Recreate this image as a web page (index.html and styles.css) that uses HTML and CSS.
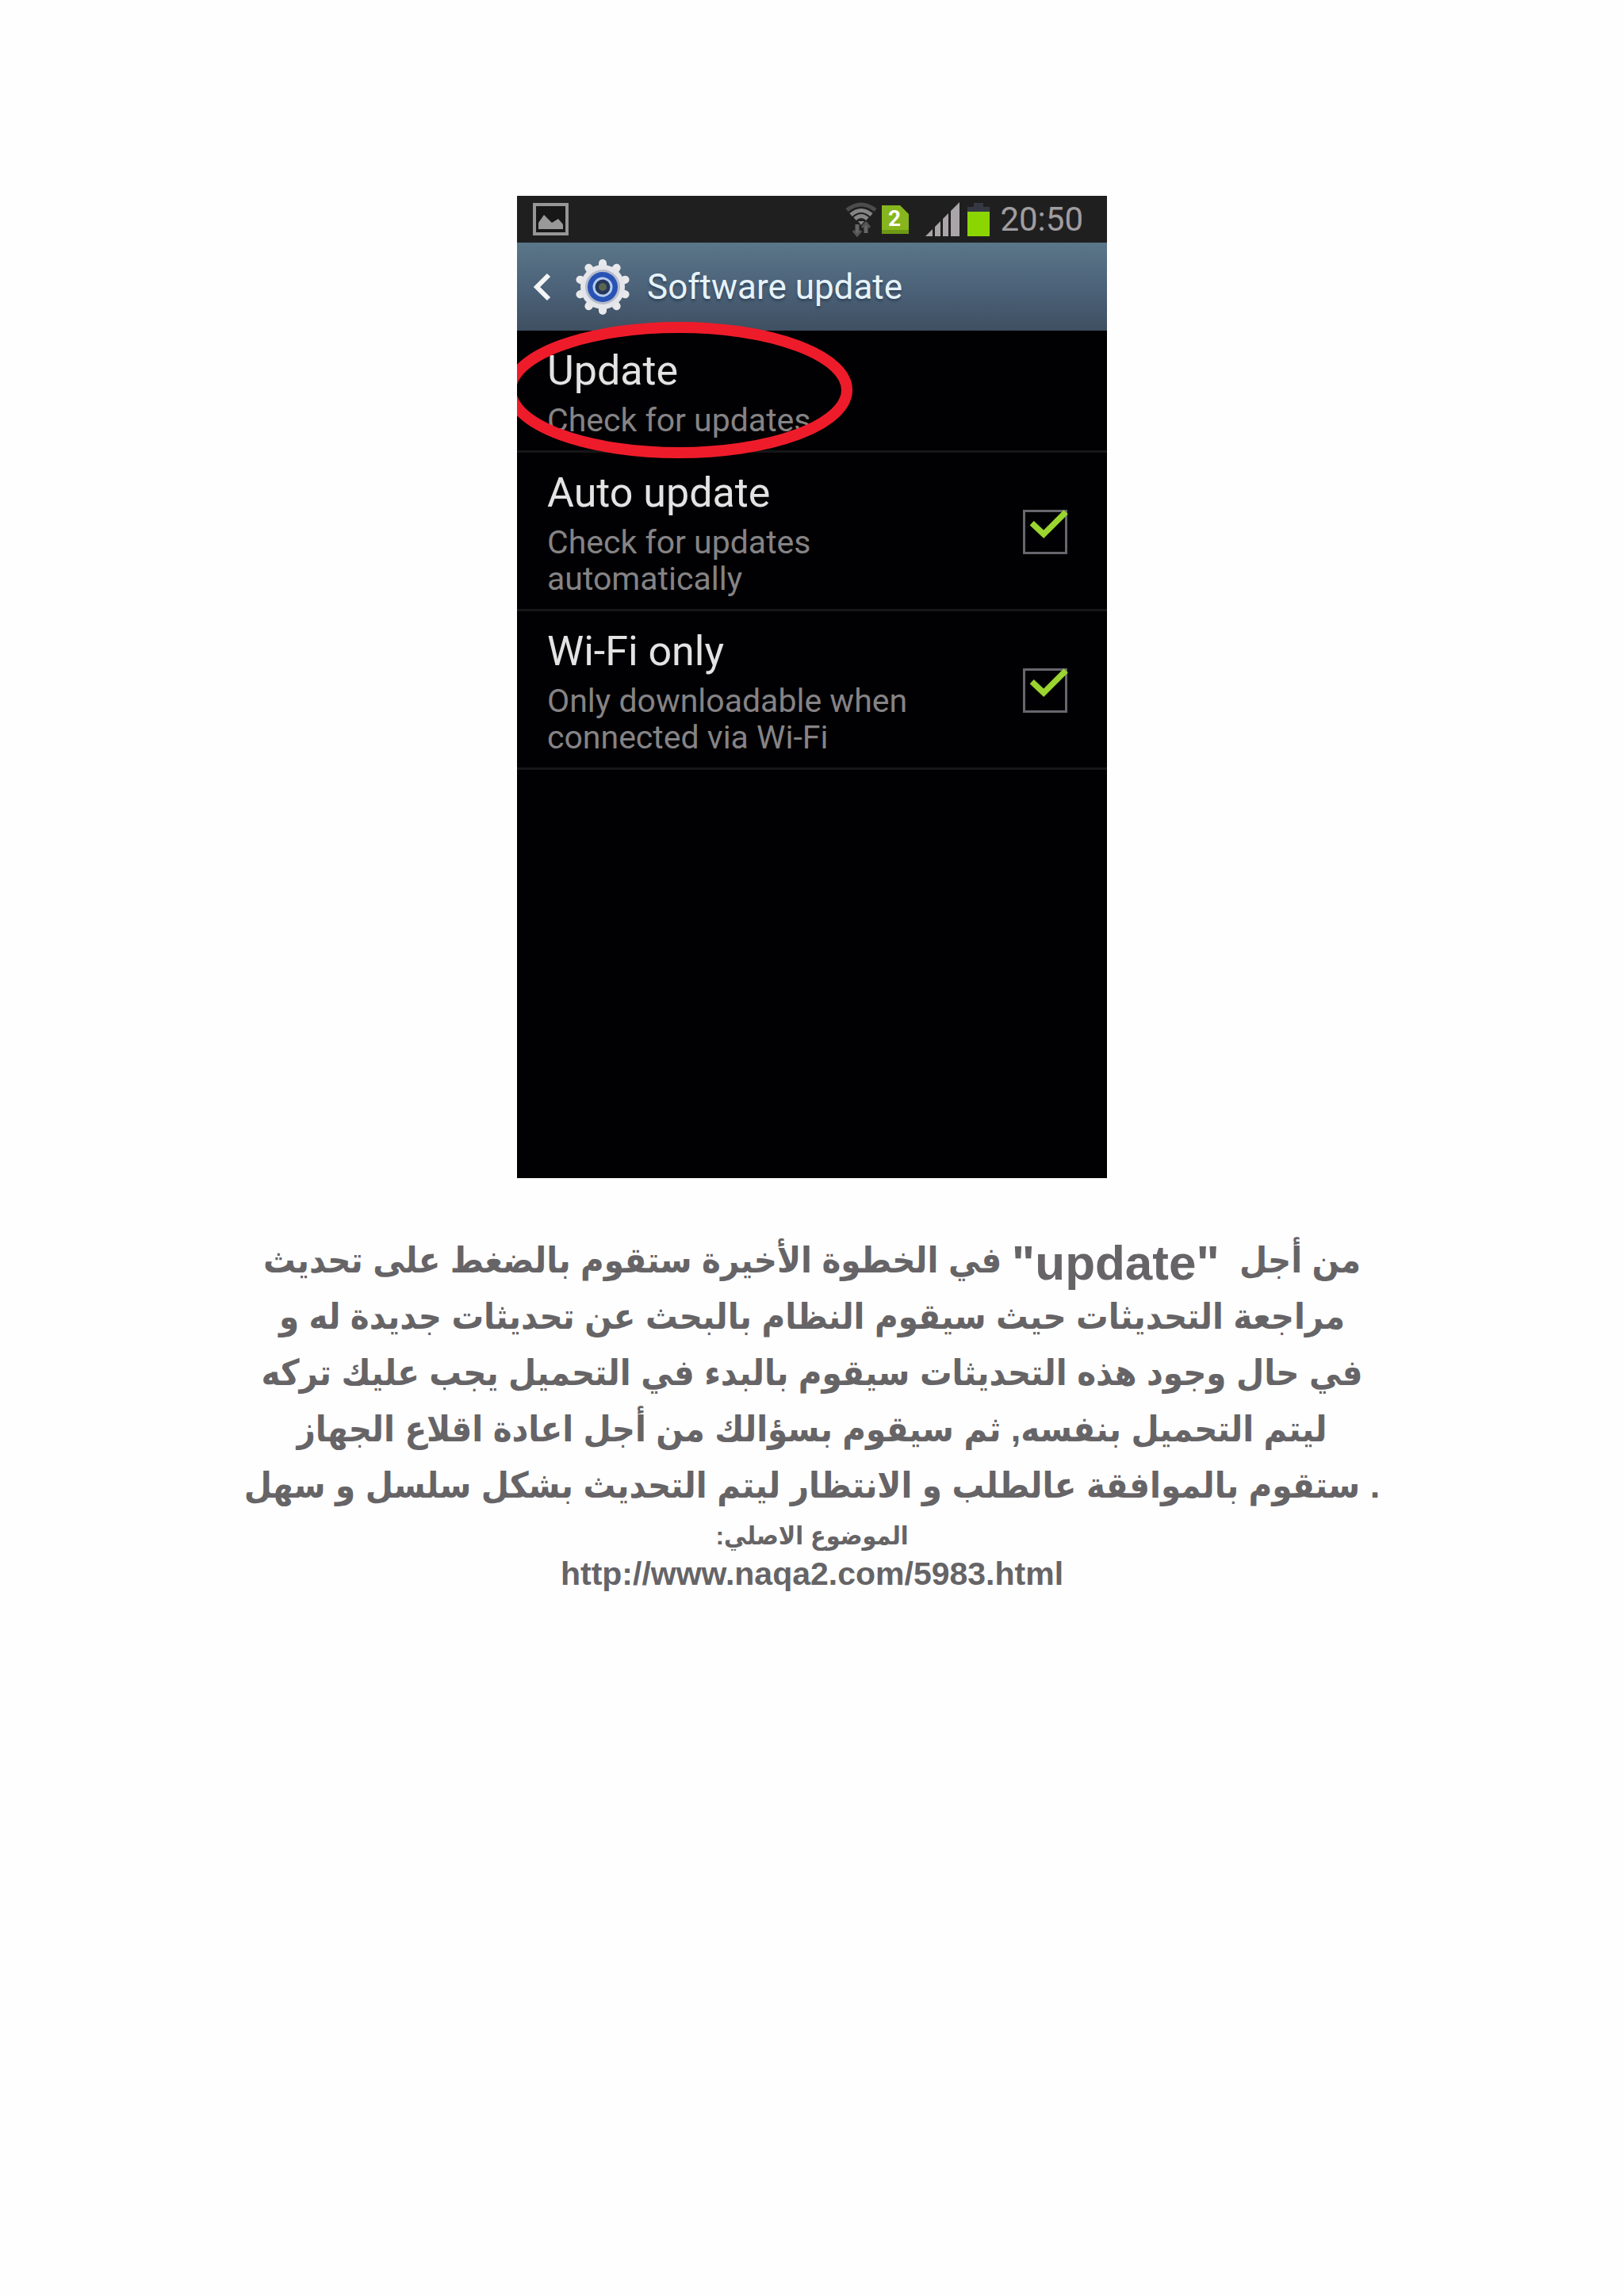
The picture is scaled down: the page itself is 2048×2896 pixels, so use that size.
FILE: index.html
```html
<!DOCTYPE html>
<html lang="ar">
<head>
  <meta charset="UTF-8">
  <meta name="viewport" content="width=device-width, initial-scale=1">
  <title>Software update</title>
  <link rel="stylesheet" href="styles.css">
</head>
<body>

  <main class="page">
    <section class="phone" lang="en">
      <div class="status-bar">
        <svg class="status-photo" width="46" height="42" viewBox="0 0 46 42">
          <rect x="2" y="2" width="41" height="37" fill="#171717" stroke="#969696" stroke-width="4"/>
          <path d="M7 33V25L14 15L24 25L32 20L38 27V33Z" fill="#999"/>
        </svg>
        <div class="status-icons">
          <svg width="42" height="46" viewBox="0 0 42 46" fill="none" stroke-width="5">
            <path d="M3 11Q21 -3 39 11" stroke="#4c4c4c"/>
            <path d="M8 17Q21 6 34 17" stroke="#858585"/>
            <path d="M13 22Q21 15 29 22" stroke="#858585"/>
            <path d="M17 25h8l-4 5z" fill="#858585"/>
            <path d="M16 42V29M27 27V40" stroke="#666"/>
            <path d="M11 37l5 6 5-6M22 33l5-6 5 6" stroke="#555" stroke-width="3"/>
          </svg>
          <svg width="36" height="40" viewBox="0 0 36 40">
            <path d="M1 2H24L35 13V38H1Z" fill="#86b51d"/>
            <path d="M1 38H35V33H1Z" fill="#6c9a15"/>
            <text class="sim-number" x="17" y="28" text-anchor="middle">2</text>
          </svg>
          <svg class="signal" width="44" height="44" viewBox="0 0 44 44" fill="#aaa5a8">
            <path d="M0 43L9 34V43ZM12 31L19 24V43H12ZM22 21L29 14V43H22ZM32 11L43 0V43H32Z"/>
          </svg>
          <svg class="battery" width="30" height="44" viewBox="0 0 30 44">
            <path d="M9 1H21V6H29V12H1V6H9Z" fill="#353743"/>
            <rect x="1" y="12" width="28" height="31" fill="#8bd600"/>
          </svg>
          <span class="clock">20:50</span>
        </div>
      </div>

      <header class="title-bar">
        <button class="back" type="button" aria-label="Back">
          <svg width="24" height="36" viewBox="0 0 24 36" fill="none" stroke="#f4f6f7" stroke-width="6">
            <path d="M20 3L5 18L20 33"/>
          </svg>
        </button>
        <svg class="gear" width="72" height="72" viewBox="-36 -36 72 72">
          <g stroke="#e9e9ec" stroke-width="10" stroke-linecap="round">
            <path d="M0 -30V30"/>
            <path d="M0 -30V30" transform="rotate(36)"/>
            <path d="M0 -30V30" transform="rotate(72)"/>
            <path d="M0 -30V30" transform="rotate(108)"/>
            <path d="M0 -30V30" transform="rotate(144)"/>
          </g>
          <circle r="28" fill="#e4e5ea"/>
          <circle r="22" fill="#b7bccb"/>
          <circle r="19" fill="#2853b5"/>
          <circle r="11" fill="#24375c" stroke="#b5cbee" stroke-width="3"/>
          <circle r="5" fill="#5a6650"/>
        </svg>
        <h1>Software update</h1>
      </header>

      <div class="settings">
        <button class="row" type="button">
          <span class="row-text">
            <span class="row-title">Update</span>
            <span class="row-note">Check for updates</span>
          </span>
        </button>
        <label class="row">
          <span class="row-text">
            <span class="row-title">Auto update</span>
            <span class="row-note">Check for updates<br>automatically</span>
          </span>
          <span class="check">
            <input type="checkbox" checked>
            <svg viewBox="0 0 60 60" fill="none" stroke="#9bd52f" stroke-width="8">
              <path d="M12 18L28 33L58 3"/>
            </svg>
          </span>
        </label>
        <label class="row">
          <span class="row-text">
            <span class="row-title">Wi-Fi only</span>
            <span class="row-note">Only downloadable when<br>connected via Wi-Fi</span>
          </span>
          <span class="check">
            <input type="checkbox" checked>
            <svg viewBox="0 0 60 60" fill="none" stroke="#9bd52f" stroke-width="8">
              <path d="M12 18L28 33L58 3"/>
            </svg>
          </span>
        </label>
      </div>

      <!-- red marker around the first row -->
      <svg class="marker" width="440" height="174" viewBox="0 0 440 174">
        <ellipse cx="220" cy="87" rx="212" ry="79" fill="none" stroke="#ee1c2a" stroke-width="14"/>
      </svg>
    </section>

    <p class="article">
      في الخطوة الأخيرة ستقوم بالضغط على تحديث <span class="latin">"update"</span> &nbsp;من أجل<br>
      مراجعة التحديثات حيث سيقوم النظام بالبحث عن تحديثات جديدة له و<br>
      في حال وجود هذه التحديثات سيقوم بالبدء في التحميل يجب عليك تركه<br>
      ليتم التحميل بنفسه, ثم سيقوم بسؤالك من أجل اعادة اقلاع الجهاز<br>
      ستقوم بالموافقة عالطلب و الانتظار ليتم التحديث بشكل سلسل و سهل .
    </p>
    <p class="source" dir="rtl">الموضوع الاصلي:</p>
    <a class="link" href="http://www.naqa2.com/5983.html">http://www.naqa2.com/5983.html</a>
  </main>

</body>
</html>
```

FILE: styles.css
```css
body {
  margin: 0;
  background: #fefefe;
  color: #666466;
  font-family: "Liberation Sans", "DejaVu Sans Condensed", "DejaVu Sans", sans-serif;
}

.page {
  display: flex;
  flex-direction: column;
  align-items: center;
  padding: 247px 24px 80px;
}

.phone {
  position: relative;
  display: flex;
  flex-direction: column;
  width: 100%;
  max-width: 744px;
  aspect-ratio: 744 / 1239;
  overflow: hidden;
  background: #010002;
  font-family: Roboto, sans-serif;
}

.status-bar {
  display: flex;
  align-items: center;
  justify-content: space-between;
  height: 59px;
  padding: 0 30px 0 20px;
  background: #201f20;
}

.status-icons {
  display: flex;
  align-items: center;
  gap: 4px;
}

.sim-number {
  fill: #fff;
  font-size: 28px;
  font-weight: 700;
}

.signal {
  margin-left: 16px;
}

.battery {
  margin-left: 4px;
}

.clock {
  margin-left: 8px;
  color: #a09da0;
  font-size: 42px;
  line-height: 48px;
}

.title-bar {
  display: flex;
  align-items: center;
  height: 111px;
  padding-left: 20px;
  background: linear-gradient(#5b7688, #4c637a 50%, #3f4f61);
}

.title-bar h1 {
  margin: 0 0 0 20px;
  color: #e6f3fa;
  font-size: 44px;
  font-weight: 400;
  text-shadow: 0 3px 3px #33465a;
}

.back {
  display: flex;
  padding: 0;
  border: 0;
  background: none;
}

.gear {
  margin-left: 28px;
}

.settings {
  display: flex;
  flex-direction: column;
}

.row {
  display: flex;
  align-items: center;
  justify-content: space-between;
  padding: 17px 50px 15px 38px;
  border: 0;
  border-bottom: 3px solid #161517;
  background: none;
  font-family: inherit;
  text-align: left;
}

.row-text {
  display: flex;
  flex-direction: column;
  gap: 5px;
}

.row-title {
  color: #e4e3e4;
  font-size: 52px;
  line-height: 68px;
}

.row-note {
  color: #858385;
  font-size: 41px;
  line-height: 46px;
}

.check {
  position: relative;
  display: flex;
}

.check input {
  appearance: none;
  width: 56px;
  height: 56px;
  margin: 0;
  border: 3px solid #68666d;
}

.check svg {
  position: absolute;
  inset: 0;
  overflow: visible;
  pointer-events: none;
}

.marker {
  position: absolute;
  top: 158px;
  left: -16px;
  pointer-events: none;
}

.article {
  margin: 68px 0 4px;
  font-size: 45px;
  font-weight: 700;
  line-height: 71px;
  text-align: center;
}

.latin {
  font-size: 62px;
  line-height: 60px;
  vertical-align: middle;
}

.source,
.link {
  margin: 0;
  color: inherit;
  font-weight: 700;
  line-height: 48px;
}

.source {
  font-size: 32px;
}

.link {
  font-size: 41px;
  text-decoration: none;
}
```
